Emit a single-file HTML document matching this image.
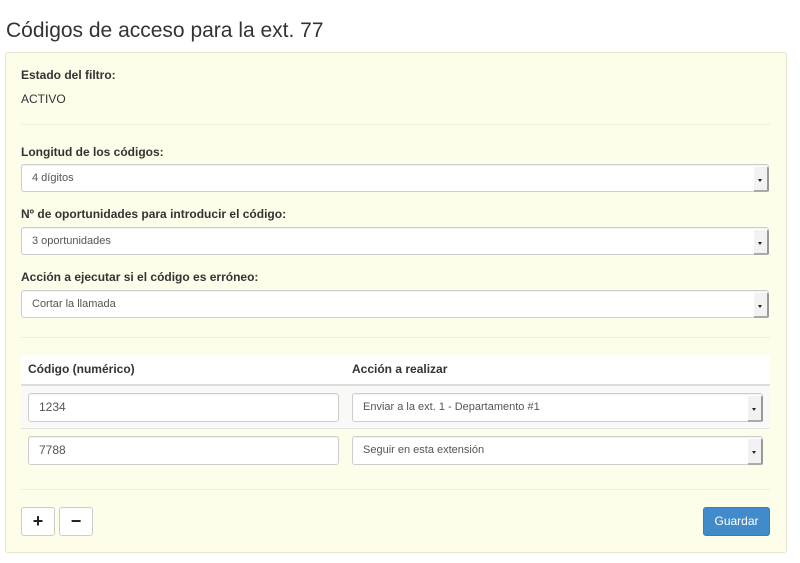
<!DOCTYPE html>
<html><head><meta charset="utf-8"><style>
body{margin:0;background:#fff;font-family:"Liberation Sans",sans-serif;color:#333;width:800px;height:563px;position:relative;overflow:hidden}
.a{position:absolute}
h1{position:absolute;left:6px;top:19px;margin:0;font-size:21px;font-weight:normal;color:#333}
.panel{left:5px;top:52px;width:780px;height:499px;background:#fefde9;border:1px solid #e8e6d0;border-radius:3px}
.lbl{font-size:12px;font-weight:bold;color:#333}
.txt{font-size:12px;color:#333}
.hr{height:1px;background:#efeddc}
.sel{background:#fff;border:1px solid #ccc;border-radius:3px;box-shadow:inset 0 1px 1px rgba(0,0,0,.05);font-size:11px;color:#555;box-sizing:border-box;padding-left:10px}
.sel .arr{position:absolute;right:-1px;top:2px;bottom:-1px;width:13px;background:#f2f2f2;border-right:2px solid #999;border-bottom:2px solid #aaa;border-radius:0 2px 2px 0}
.sel .arr:after{content:"";position:absolute;left:4px;top:50%;border-left:2.5px solid transparent;border-right:2.5px solid transparent;border-top:3px solid #222}
.btn{background:#fff;border:1px solid #ccc;border-radius:3px;box-sizing:border-box;text-align:center;font-weight:bold;font-size:18px;color:#222}
</style></head><body>
<h1>Códigos de acceso para la ext. 77</h1>
<div class="a panel"></div>
<div class="a lbl" style="left:21px;top:68px">Estado del filtro:</div>
<div class="a txt" style="left:21px;top:92px">ACTIVO</div>
<div class="a hr" style="left:21px;top:124px;width:749px"></div>
<div class="a lbl" style="left:21px;top:145px">Longitud de los códigos:</div>
<div class="a sel" style="left:21px;top:164px;width:748px;height:28px;line-height:26px">4 dígitos<span class="arr"></span></div>
<div class="a lbl" style="left:21px;top:207px">Nº de oportunidades para introducir el código:</div>
<div class="a sel" style="left:21px;top:227px;width:748px;height:28px;line-height:26px">3 oportunidades<span class="arr"></span></div>
<div class="a lbl" style="left:21px;top:270px">Acción a ejecutar si el código es erróneo:</div>
<div class="a sel" style="left:21px;top:290px;width:748px;height:28px;line-height:26px">Cortar la llamada<span class="arr"></span></div>
<div class="a hr" style="left:21px;top:337px;width:749px"></div>
<div class="a" style="left:21px;top:355px;width:749px;height:29px;background:#fff;border-bottom:2px solid #ddd"></div>
<div class="a lbl" style="left:28px;top:362px">Código (numérico)</div>
<div class="a lbl" style="left:352px;top:362px">Acción a realizar</div>
<div class="a" style="left:21px;top:386px;width:749px;height:42px;background:#f9f9f7;border-bottom:1px solid #e5e5e5"></div>
<div class="a sel" style="left:28px;top:393px;width:311px;height:29px;line-height:27px;font-size:12px">1234</div>
<div class="a sel" style="left:352px;top:393px;width:411px;height:29px;line-height:27px">Enviar a la ext. 1 - Departamento #1<span class="arr"></span></div>
<div class="a sel" style="left:28px;top:436px;width:311px;height:29px;line-height:27px;font-size:12px">7788</div>
<div class="a sel" style="left:352px;top:436px;width:411px;height:29px;line-height:27px">Seguir en esta extensión<span class="arr"></span></div>
<div class="a hr" style="left:21px;top:489px;width:749px"></div>
<div class="a btn" style="left:21px;top:507px;width:34px;height:29px;line-height:26px">+</div>
<div class="a btn" style="left:59px;top:507px;width:34px;height:29px;line-height:26px">−</div>
<div class="a" style="left:703px;top:507px;width:67px;height:29px;background:#428bca;border:1px solid #357ebd;border-radius:3px;box-sizing:border-box;color:#fff;font-size:12px;text-align:center;line-height:27px">Guardar</div>
</body></html>
